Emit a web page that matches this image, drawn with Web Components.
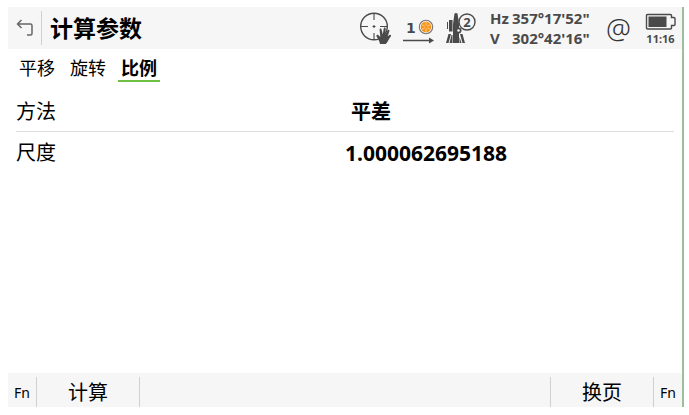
<!DOCTYPE html>
<html lang="zh-CN">
<head>
<meta charset="utf-8">
<title>计算参数</title>
<style>
  body {
    --bar: #f6f6f6;
    --ink: #4a4a4a;
    --rule: #d0d0d0;
    --accent: #6fbf44;
    display: flex;
    box-sizing: border-box;
    min-height: 100vh;
    margin: 0;
    padding: 7px 5px 8px 8px;
    background: #fff;
    color: #000;
    font-family: "Noto Sans", "Noto Sans CJK SC", sans-serif;
  }
</style>
</head>
<body>
  <survey-screen>
    <title-bar slot="header" heading="计算参数">
      <status-icon name="aim"></status-icon>
      <status-icon name="prism"></status-icon>
      <status-icon name="station"></status-icon>
      <angle-readout hz="357°17'52&quot;" v="302°42'16&quot;"></angle-readout>
      <at-sign>@</at-sign>
      <battery-clock time="11:16"></battery-clock>
    </title-bar>
    <page-tabs slot="tabs" labels="平移,旋转,比例" selected="2"></page-tabs>
    <value-row label="方法" inset>平差</value-row>
    <value-row label="尺度" last>1.000062695188</value-row>
    <soft-keys slot="footer">
      <soft-key small>Fn</soft-key>
      <soft-key>计算</soft-key>
      <soft-key slot="end">换页</soft-key>
      <soft-key slot="end" small>Fn</soft-key>
    </soft-keys>
  </survey-screen>

<script>
const define = (name, html, setup) => {
  const template = document.createElement("template");
  template.innerHTML = html;

  customElements.define(
    name,
    class extends HTMLElement {
      constructor() {
        super();
        this.attachShadow({ mode: "open" });
        this.shadowRoot.appendChild(template.content.cloneNode(true));
      }

      connectedCallback() {
        if (setup) setup(this, this.shadowRoot);
      }
    }
  );
};

define("survey-screen", `
  <style>
    :host {
      display: flex;
      flex: 1;
      flex-direction: column;
      border-right: 2px solid #9dbd9d;
    }
    main {
      flex: 1;
      padding: 0 8px;
    }
  </style>
  <slot name="header"></slot>
  <slot name="tabs"></slot>
  <main><slot></slot></main>
  <slot name="footer"></slot>
`);

define("title-bar", `
  <style>
    :host {
      display: block;
      background: var(--bar);
      color: var(--ink);
    }
    header {
      display: flex;
      align-items: center;
      height: 42px;
      padding-right: 6px;
    }
    button {
      display: grid;
      place-items: center;
      width: 34px;
      height: 34px;
      padding: 0;
      border: 0;
      border-right: 1px solid var(--rule);
      background: none;
      color: inherit;
    }
    h1 {
      flex: 1;
      margin: 0 0 0 8px;
      color: #000;
      font-size: 23px;
      line-height: 32px;
      white-space: nowrap;
    }
    .status {
      display: flex;
      align-items: center;
      gap: 12px;
    }
  </style>
  <header>
    <button aria-label="返回">
      <svg width="18" height="18" viewBox="0 0 18 18" fill="none" stroke="#666" stroke-width="1.5">
        <path d="M5.500 1 1.500 5l4 4M1.500 5h13q1.500 0 1.500 1.500v8q0 1.500-1.500 1.500h-3.500"/>
      </svg>
    </button>
    <h1></h1>
    <div class="status"><slot></slot></div>
  </header>
`, (host, root) => {
  root.querySelector("h1").textContent = host.getAttribute("heading");
});

const icons = {
  aim: `
    <svg width="32" height="34" viewBox="0 0 32 34" fill="none" stroke="currentColor">
      <circle cx="15" cy="15.500" r="13.3" stroke-width="1.4"/>
      <path stroke-width="1.1" d="M15 2v7M15 22v6M2 15.500h7M21 15.500h7M13.500 15.500h3M15 14v3"/>
      <path fill="currentColor" stroke="none" d="M21 33c-.6-3-2-5.300-3.400-7.500-.7-1.300.8-2.200 1.900-1.200l1.800 1.700-.7-7.200c0-1.500 1.700-1.700 2-.2l1.200 5 .9-6c.3-1.500 2.100-1.200 2 .2l-.4 6.200 2.300-4.700c.7-1.200 2.200-.6 1.800.8l-1.700 5.400 1.700-1.400c1.100-.8 2.200.2 1.400 1.300-2 2.400-2.700 5-5 7.600Z"/>
    </svg>`,
  prism: `
    <svg width="31" height="34" viewBox="0 0 31 34">
      <text x="3" y="22" fill="currentColor" font-family="DejaVu Sans" font-size="14" font-weight="700">1</text>
      <circle cx="23" cy="16" r="6.700" fill="#fff" stroke="#777" stroke-width="1.100"/>
      <circle cx="23" cy="16" r="5.400" fill="#f7941d"/>
      <path d="M23 11v10M18.700 13.500l8.600 5M18.700 18.500l8.600-5" stroke="#ffd9a3" stroke-width=".8"/>
      <circle cx="23" cy="16" r="1.400" fill="#f7941d"/>
      <path d="M0 29.500h28" stroke="currentColor" stroke-width="1.500"/>
      <path d="m26 26.500 5 3-5 3z" fill="currentColor"/>
    </svg>`,
  station: `
    <svg width="32" height="34" viewBox="0 0 32 34">
      <g fill="currentColor">
        <path d="M7 32V13L8.500 2.500q1.500-1 3 0L13 13v19zM3 9h3.500v11.500H3zM1 11h1v7H1z"/>
        <path d="M2.500 23H5L2.500 32H0zM5.500 24h1v8h-3zM14 23h2.500l2.500 9h-2.500zM13.500 26l2 6h-2z"/>
        <circle cx="12.500" cy="19.500" r="3"/>
      </g>
      <circle cx="12.500" cy="19.500" r="1.200" fill="#fff"/>
      <circle cx="21" cy="11" r="8" fill="#f6f6f6" stroke="currentColor" stroke-width="1.400"/>
      <text x="21" y="16" fill="currentColor" font-family="Noto Sans" font-size="13" font-weight="700" text-anchor="middle">2</text>
    </svg>`,
};

define("status-icon", `
  <style>
    :host {
      display: block;
    }
    svg {
      display: block;
    }
  </style>
`, (host, root) => {
  root.innerHTML += icons[host.getAttribute("name")];
});

define("angle-readout", `
  <style>
    :host {
      display: block;
      width: 104px;
    }
    dl {
      display: grid;
      grid-template-columns: 22px 1fr;
      margin: 0;
      font-size: 15px;
      font-weight: 700;
      line-height: 20px;
      white-space: nowrap;
    }
    dd {
      margin: 0;
    }
  </style>
  <dl>
    <dt>Hz</dt><dd class="hz"></dd>
    <dt>V</dt><dd class="v"></dd>
  </dl>
`, (host, root) => {
  root.querySelector(".hz").textContent = host.getAttribute("hz");
  root.querySelector(".v").textContent = host.getAttribute("v");
});

define("at-sign", `
  <style>
    :host {
      display: block;
      width: 27px;
      color: #333;
      font-size: 28px;
      font-weight: 300;
      line-height: 34px;
    }
  </style>
  <slot></slot>
`);

define("battery-clock", `
  <style>
    :host {
      display: grid;
      justify-items: center;
      padding-top: 3px;
      font-size: 11px;
      font-weight: 700;
      line-height: 16px;
    }
  </style>
  <svg width="31" height="18" viewBox="0 0 31 18" fill="none" stroke="currentColor" stroke-width="1.4">
    <path d="M2.500 1.500h23q1 0 1 1V4.500h2.500q1 0 1 1v6q0 1-1 1h-2.500v2.500q0 1-1 1h-23q-1 0-1-1v-12.500q0-1 1-1z"/>
    <path fill="currentColor" stroke="none" d="M3.500 3.500h18v10.500h-18z"/>
  </svg>
  <time></time>
`, (host, root) => {
  root.querySelector("time").textContent = host.getAttribute("time");
});

define("page-tabs", `
  <style>
    :host {
      display: block;
      padding: 8px 8px 9px;
    }
    div {
      display: flex;
      gap: 9px;
    }
    button {
      padding: 0 3px;
      border: 0;
      border-bottom: 2px solid transparent;
      background: none;
      color: inherit;
      font: 18px/23px "Noto Sans", "Noto Sans CJK SC", sans-serif;
    }
    button[aria-selected="true"] {
      border-color: var(--accent);
      font-weight: 700;
    }
  </style>
  <div role="tablist"></div>
`, (host, root) => {
  const list = root.querySelector("div");
  const selected = Number(host.getAttribute("selected"));
  host.getAttribute("labels").split(",").forEach((label, index) => {
    const tab = document.createElement("button");
    tab.setAttribute("role", "tab");
    tab.setAttribute("aria-selected", index === selected);
    tab.textContent = label;
    list.appendChild(tab);
  });
});

define("value-row", `
  <style>
    :host {
      display: block;
      border-bottom: 1px solid #ddd;
    }
    :host([last]) {
      border-bottom: 0;
    }
    dl {
      display: grid;
      grid-template-columns: 1fr 1fr;
      align-items: center;
      margin: 0;
      padding-top: 2px;
      font-size: 20px;
      line-height: 38px;
    }
    dd {
      margin: 0;
      font-size: 21px;
      font-weight: 700;
    }
    :host([inset]) dd {
      padding-left: 6px;
      font-size: 20px;
    }
  </style>
  <dl>
    <dt></dt>
    <dd><slot></slot></dd>
  </dl>
`, (host, root) => {
  root.querySelector("dt").textContent = host.getAttribute("label");
});

define("soft-keys", `
  <style>
    :host {
      display: block;
      background: var(--bar);
    }
    footer {
      display: flex;
      justify-content: space-between;
      padding-top: 4px;
    }
    div {
      display: flex;
    }
    .start {
      --key-right: 1px;
    }
    .end {
      --key-left: 1px;
    }
  </style>
  <footer>
    <div class="start"><slot></slot></div>
    <div class="end"><slot name="end"></slot></div>
  </footer>
`);

define("soft-key", `
  <style>
    :host {
      display: block;
    }
    button {
      display: block;
      box-sizing: border-box;
      width: 103px;
      height: 30px;
      padding: 0;
      border: 0 solid var(--rule);
      border-left-width: var(--key-left, 0);
      border-right-width: var(--key-right, 0);
      background: none;
      color: inherit;
      font: 20px/32px "Noto Sans", "Noto Sans CJK SC", sans-serif;
    }
    :host([small]) button {
      width: 29px;
      font-size: 14px;
    }
  </style>
  <button><slot></slot></button>
`);
</script>
</body>
</html>
